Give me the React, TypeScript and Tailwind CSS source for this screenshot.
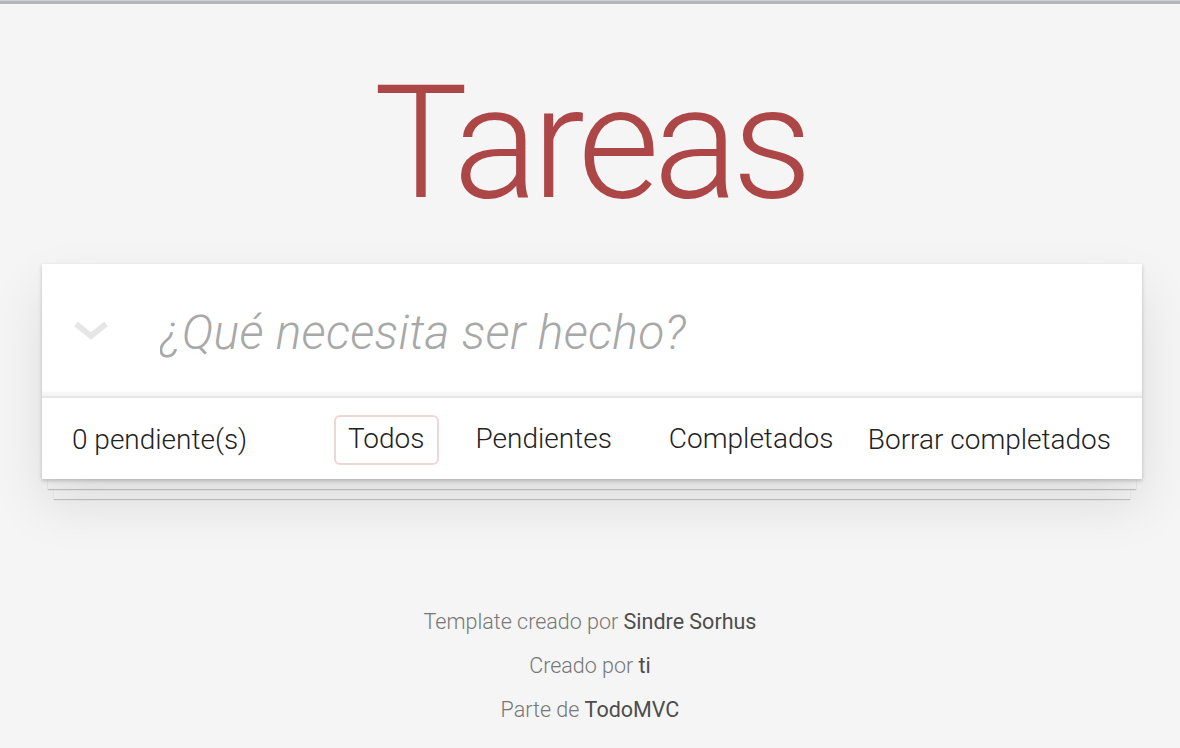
const font = { fontFamily: "Roboto, 'Liberation Sans', sans-serif" };

const filters = [
  { label: "Todos", selected: true },
  { label: "Pendientes", selected: false },
  { label: "Completados", selected: false },
];

export default function App() {
  return (
    <div className="min-h-[748px] bg-[#f5f5f5] text-[#4d4d4d] font-light" style={font}>
      {/* top strip */}
      <div className="h-[4px] bg-[#b4b4bb] border-t-[1.5px] border-[#d0d0d6]" />

      <h1 className="text-center text-[158px] leading-none font-light text-[#ad4747] pt-[60px] tracking-[-6px]">
        Tareas
      </h1>

      <section className="w-[1100px] ml-[42px] mt-[42px]">
        <div className="relative bg-white shadow-[0_2px_4px_rgba(0,0,0,0.2),0_25px_50px_0_rgba(0,0,0,0.1)] z-10">
          <div className="flex items-center h-[132px] shadow-[inset_0_-4px_2px_rgba(0,0,0,0.04)]">
            <div className="w-[118px] pl-[32px]">
              <svg width="34" height="22" viewBox="0 0 34 22" className="mt-[2px]">
                <polyline points="2,4 17,16 32,4" fill="none" stroke="#e6e6e6" strokeWidth="6" />
              </svg>
            </div>
            <input
              className="flex-1 h-full bg-transparent outline-none text-[48px] italic font-light placeholder:text-[#a8a8a8] placeholder:italic pt-[4px]"
              placeholder="¿Qué necesita ser hecho?"
              style={{ ...font, letterSpacing: "0.3px" }}
            />
          </div>
          <footer className="flex items-center h-[83px] border-t-2 border-[#e6e6e6] pl-[30px] pr-[31px] pt-[2px] text-[28px] text-[#222]">
            <span className="w-[262px]">0 pendiente(s)</span>
            <ul className="flex gap-[23px]">
              {filters.map((f) => (
                <li key={f.label} className={f.label === "Completados" ? "ml-[6px]" : ""}>
                  <a
                    className={
                      "block px-[12px] h-[50px] leading-[44px] rounded-[6px] border-2 " +
                      (f.selected ? "border-[#efd6d6]" : "border-transparent")
                    }
                  >
                    {f.label}
                  </a>
                </li>
              ))}
            </ul>
            <button className="ml-auto font-light" style={font}>
              Borrar completados
            </button>
          </footer>
        </div>
        <div className="mx-[6px] h-[10px] bg-[#f6f6f6] shadow-[0_1px_1px_rgba(0,0,0,0.2)] relative z-[5]" />
        <div className="mx-[12px] h-[10px] bg-[#f6f6f6] shadow-[0_1px_1px_rgba(0,0,0,0.2)]" />
      </section>

      <footer className="mt-[101px] text-center text-[21.5px] leading-[44px] text-[#777]">
        <p>
          Template creado por <a className="font-normal text-[#4d4d4d]">Sindre Sorhus</a>
        </p>
        <p>
          Creado por <a className="font-normal text-[#4d4d4d]">ti</a>
        </p>
        <p>
          Parte de <a className="font-normal text-[#4d4d4d]">TodoMVC</a>
        </p>
      </footer>
    </div>
  );
}
